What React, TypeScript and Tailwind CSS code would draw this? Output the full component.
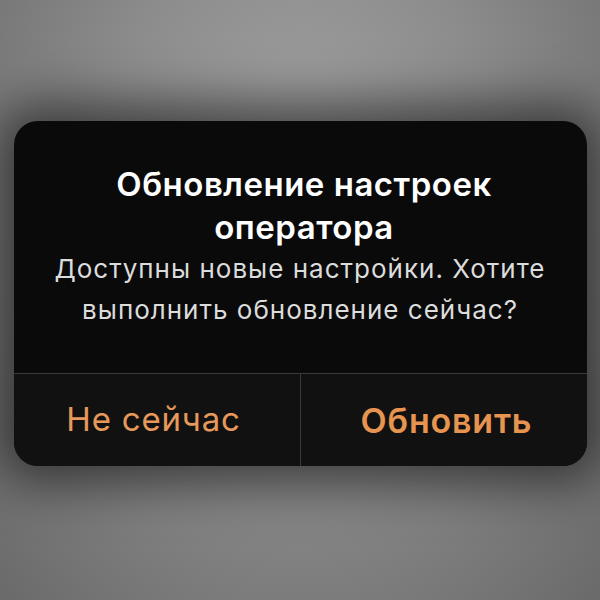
export default function App() {
  return (
    <div
      className="flex h-[600px] w-[600px] items-start justify-center bg-[radial-gradient(ellipse_at_50%_30%,#a2a2a2_0%,#8c8c8c_45%,#6a6a6a_100%)] pt-[121px]"
      style={{ fontFamily: "Inter, 'Noto Sans', sans-serif" }}
    >
      <div className="flex h-[345px] w-[573px] flex-col overflow-hidden rounded-[24px] bg-[#0a0a0a] shadow-[0_0_50px_18px_rgba(0,0,0,0.55)]">
        <div className="flex flex-1 flex-col items-center pt-[42px] text-center">
          <h1 className="pl-[8px] text-[33px] font-semibold leading-[43px] tracking-[0.5px] text-white">
            Обновление настроек
            <br />
            оператора
          </h1>
          <p className="mt-[-1px] text-[26px] leading-[41px] tracking-[1px] text-[#dcdcdc]">
            Доступны новые настройки. Хотите
            <br />
            выполнить обновление сейчас?
          </p>
        </div>
        <div className="flex h-[93px] border-t border-[#3a3a3a] bg-[#111111]">
          <button className="flex flex-1 items-center justify-center pr-[6px] text-[33px] tracking-[0.8px] text-[#e6995a]">
            Не сейчас
          </button>
          <div className="w-px bg-[#3a3a3a]" />
          <button className="flex flex-1 items-center justify-center pl-[6px] text-[34px] font-semibold tracking-[0.8px] text-[#e6944f]">
            Обновить
          </button>
        </div>
      </div>
    </div>
  );
}
